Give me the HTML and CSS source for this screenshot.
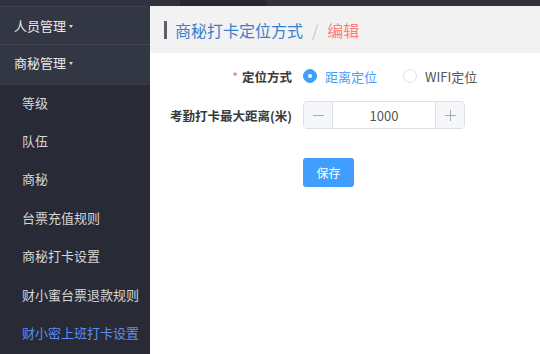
FILE: index.html
```html
<!DOCTYPE html>
<html lang="zh">
<head>
<meta charset="utf-8">
<title>商秘打卡定位方式</title>
<link rel="stylesheet" href="styles.css">
</head>
<body>
<div class="topbar">
  <div class="tb-seg tb-left"></div>
  <div class="tb-seg tb-active"></div>
  <div class="tb-seg tb-rest"></div>
</div>
<div class="main">
  <aside class="sidebar">
    <div class="menu-group">
      <div class="menu-top">人员管理<span class="caret"></span></div>
      <div class="menu-top second">商秘管理<span class="caret"></span></div>
    </div>
    <ul class="submenu">
      <li>等级</li>
      <li>队伍</li>
      <li>商秘</li>
      <li>台票充值规则</li>
      <li>商秘打卡设置</li>
      <li>财小蜜台票退款规则</li>
      <li class="active">财小密上班打卡设置</li>
    </ul>
  </aside>
  <section class="content">
    <div class="crumbs">
      <span class="crumb-bar"></span>
      <span class="crumb-link">商秘打卡定位方式</span>
      <span class="crumb-sep">/</span>
      <span class="crumb-cur">编辑</span>
    </div>
    <form class="form">
      <div class="form-row first">
        <label class="form-label"><span class="req">*</span>定位方式</label>
        <div class="radios">
          <span class="radio checked"><span class="radio-dot"></span>距离定位</span>
          <span class="radio"><span class="radio-dot"></span>WIFI定位</span>
        </div>
      </div>
      <div class="form-row">
        <label class="form-label">考勤打卡最大距离(米)</label>
        <div class="num">
          <span class="num-btn minus"><svg width="11" height="11" viewBox="0 0 11 11"><line x1="0" y1="5.5" x2="11" y2="5.5" stroke="#a8abb2" stroke-width="1"/></svg></span>
          <span class="num-val">1000</span>
          <span class="num-btn plus"><svg width="11" height="11" viewBox="0 0 11 11"><line x1="0" y1="5.5" x2="11" y2="5.5" stroke="#a8abb2" stroke-width="1"/><line x1="5.5" y1="0" x2="5.5" y2="11" stroke="#a8abb2" stroke-width="1"/></svg></span>
        </div>
      </div>
      <div class="form-row actions">
        <span class="form-label"></span>
        <button type="button" class="btn-save">保存</button>
      </div>
    </form>
  </section>
</div>
</body>
</html>
```

FILE: styles.css
```css
* { box-sizing: border-box; }
html, body {
  margin: 0;
  padding: 0;
  width: 540px;
  height: 354px;
  overflow: hidden;
  font-family: "Noto Sans CJK SC", "Noto Sans", sans-serif;
  background: #ffffff;
}
.topbar {
  display: flex;
  height: 6px;
}
.tb-left { width: 180px; background: #30333f; }
.tb-active { width: 86px; background: #262934; }
.tb-rest { flex: 1; background: #30333f; }

.main {
  display: flex;
  height: 348px;
}
.sidebar {
  width: 150px;
  flex: none;
  background: #282a35;
  display: flex;
  flex-direction: column;
}
.menu-group {
  background: #333643;
  border-top: 1px solid #3d404c;
  border-top-right-radius: 4px;
}
.menu-top {
  height: 38px;
  display: flex;
  align-items: center;
  padding-left: 14px;
  color: #eaeaea;
  font-size: 13px;
  border-bottom: 1px solid #414450;
}
.menu-top.second {
  height: 40px;
  padding-bottom: 4px;
  border-bottom: 1px solid #3a3d49;
}
.caret {
  width: 0;
  height: 0;
  margin-left: 3px;
  margin-top: 2px;
  border-left: 2.5px solid transparent;
  border-right: 2.5px solid transparent;
  border-top: 3px solid #d8d8d8;
}
.submenu {
  list-style: none;
  margin: -2px 0 0;
  padding: 0;
}
.submenu li {
  height: 38.4px;
  display: flex;
  align-items: center;
  padding-left: 22px;
  font-size: 13px;
  color: #d6d6d6;
  white-space: nowrap;
}
.submenu li.active { color: #5b8ef4; }

.content {
  flex: 1;
  display: flex;
  flex-direction: column;
}
.crumbs {
  height: 47px;
  background: #f2f2f2;
  display: flex;
  align-items: center;
  padding-left: 14px;
  font-size: 16px;
}
.crumb-bar {
  width: 3px;
  height: 18px;
  background: #56606e;
  margin-right: 8px;
}
.crumb-link { color: #3b7fcc; }
.crumb-sep { color: #c8c8c8; margin: 0 9px; }
.crumb-cur { color: #fa8378; }

.form {
  display: flex;
  flex-direction: column;
  padding-top: 9px;
}
.form-row {
  display: flex;
  align-items: center;
  height: 28px;
  margin-bottom: 11px;
}
.form-row.actions {
  margin-top: 18px;
  height: 29px;
}
.form-label {
  width: 153px;
  padding-right: 11px;
  text-align: right;
  font-size: 12.5px;
  font-weight: bold;
  color: #3a3a3a;
  white-space: nowrap;
}
.req { color: #f56c6c; margin-right: 4px; font-weight: normal; }

.radios { display: flex; align-items: center; }
.radio {
  display: flex;
  align-items: center;
  font-size: 13px;
  color: #555;
  margin-right: 26px;
}
.radio-dot {
  width: 14px;
  height: 14px;
  border-radius: 50%;
  border: 1px solid #dcdfe6;
  background: #fff;
  margin-right: 8px;
  position: relative;
}
.radio.checked { color: #409eff; }
.radio.checked .radio-dot {
  background: #409eff;
  border-color: #409eff;
}
.radio.checked .radio-dot::after {
  content: "";
  position: absolute;
  left: 50%;
  top: 50%;
  width: 4px;
  height: 4px;
  margin: -2px 0 0 -2px;
  border-radius: 50%;
  background: #fff;
}

.num {
  width: 162px;
  height: 28px;
  display: flex;
  border: 1px solid #dcdfe6;
  border-radius: 4px;
  overflow: hidden;
}
.num-btn {
  width: 29px;
  flex: none;
  background: #f5f7fa;
  display: flex;
  align-items: center;
  justify-content: center;
}
.num-btn.minus { border-right: 1px solid #dcdfe6; }
.num-btn.plus { border-left: 1px solid #dcdfe6; }
.num-val {
  flex: 1;
  display: flex;
  align-items: center;
  justify-content: center;
  font-size: 13px;
  color: #555;
}
.btn-save {
  width: 51px;
  height: 29px;
  border: none;
  border-radius: 3px;
  background: #409eff;
  color: #fff;
  font-family: inherit;
  font-size: 12px;
  padding: 0;
}
```
